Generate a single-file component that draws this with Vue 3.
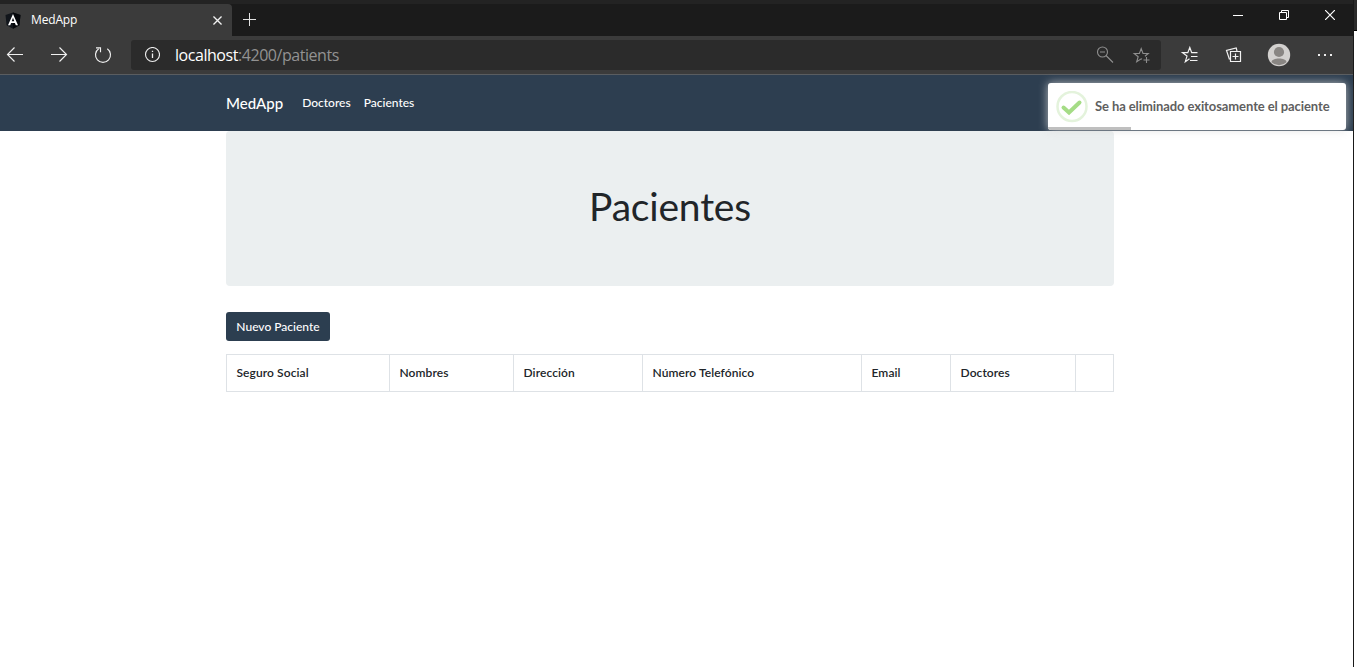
<script setup>
const columns = [
  { label: 'Seguro Social', width: 163 },
  { label: 'Nombres', width: 124 },
  { label: 'Dirección', width: 129 },
  { label: 'Número Telefónico', width: 219 },
  { label: 'Email', width: 89 },
  { label: 'Doctores', width: 125 },
  { label: '', width: 38 },
]
</script>

<template>
  <div class="screen">
    <div class="window">
      <div class="tabstrip">
        <div class="tab">
          <svg class="favicon" width="16" height="17" viewBox="0 0 16 17">
            <path d="M8 .5 15.500 3l-1.100 10.200L8 16.700 1.600 13.200.5 3Z" fill="#11151b" />
            <path d="M8 .5 15.500 3l-1.100 10.200L8 16.700Z" fill="#05070b" />
            <path d="M8 2 3 13.200h2.200l.9-2.300h3.800l.9 2.300H13ZM8 5.800l1.300 3.400H6.700Z" fill="#fff" />
          </svg>
          <span class="tab-title">MedApp</span>
          <svg class="tab-close" width="9" height="9" viewBox="0 0 10 10" fill="none" stroke="#f2f2f2" stroke-width="1.500">
            <path d="m.5.5 9 9M9.500.5l-9 9" />
          </svg>
        </div>
        <svg class="new-tab" width="13" height="13" viewBox="0 0 13 13" fill="none" stroke="#e4e4e4">
          <path d="M6.500 0v13M0 6.500h13" />
        </svg>
        <div class="controls">
          <svg width="10" height="10" viewBox="0 0 10 10" fill="none" stroke="#fff"><path d="M0 5.500h10" /></svg>
          <svg width="10" height="10" viewBox="0 0 10 10" fill="none" stroke="#fff"><path d="M.5 2.500h7v7h-7ZM2.500 2.500v-2h7v7h-2" /></svg>
          <svg width="10" height="10" viewBox="0 0 10 10" fill="none" stroke="#fff" stroke-width="1.200"><path d="m0 0 10 10M10 0 0 10" /></svg>
        </div>
      </div>

      <div class="toolbar">
        <svg class="nav-icons" width="131" height="38" viewBox="0 0 131 38" fill="none" stroke="#f0f0f0" stroke-width="1.150">
          <path d="M7.500 18.500H23M14.500 11.500l-7 7 7 7" />
          <path d="M51 18.500h15.500M59.500 11.500l7 7-7 7" />
          <path d="M107.300 12.700a7.500 7.500 0 1 1-8.600 0" />
          <path d="M96 11.800h4.500v4.500" />
        </svg>
        <div class="address">
          <svg width="16" height="16" viewBox="0 0 16 16" fill="none" stroke="#efefef" stroke-width="1.100">
            <circle cx="8.500" cy="7.500" r="7" />
            <path d="M8.500 6.500V11M8.500 3.700V5" stroke-width="1.300" />
          </svg>
          <span class="url"><b>localhost</b>:4200/patients</span>
          <svg class="address-actions" width="54" height="18" viewBox="0 0 54 18" fill="none" stroke="#8e8e8e" stroke-width="1.100">
            <circle cx="5.500" cy="6" r="5" />
            <path d="M3 6h5M9 9.500l7 7" />
            <path d="m45 13.300-.8-.5-4.500 3 1.500-5.100-4-3.200h5.200l1.800-5 1.800 5h5.200l-3.300 2.700M49.500 11v6M46.500 14h6" />
          </svg>
        </div>
        <svg class="tools" width="192" height="38" viewBox="0 0 192 38" fill="none" stroke="#f2f2f2" stroke-width="1.200">
          <path d="M28.500 22.800 24.300 25.700l1.700-5.600-4.500-3.400h5.300l2-5.200 1.900 5.200H36.500M30 20.500h6.500M29 24.500h7.500" />
          <path d="m68.500 23.500-3-9 9.700-2.600.8 3.100M69.500 15.500h10v10h-10ZM74.500 17.500v6M71.500 20.500h6" />
          <g stroke="none">
            <circle cx="118" cy="19" r="11.200" fill="#d3d1cf" />
            <circle cx="118" cy="16" r="5.100" fill="#898683" />
            <path d="M110.500 26.200c0-5 15-5 15 0a11 11 0 0 1-15 0Z" fill="#898683" />
            <path d="M157 18h2v2h-2ZM163 18h2v2h-2ZM169 18h2v2h-2Z" fill="#eee" />
          </g>
        </svg>
      </div>

      <nav class="navbar">
        <a class="brand">MedApp</a>
        <a class="link doctors">Doctores</a>
        <a class="link">Pacientes</a>
        <div class="toast">
          <svg width="32" height="32" viewBox="0 0 32 32" fill="none">
            <circle cx="16" cy="15.500" r="14.500" stroke="#e4f3dc" stroke-width="2.500" />
            <path d="m7.500 16.500 5.500 5 10.500-10" stroke="#a5dc86" stroke-width="4" stroke-linecap="round" />
          </svg>
          <span class="toast-text">Se ha eliminado exitosamente el paciente</span>
          <div class="progress"></div>
        </div>
      </nav>

      <main class="container">
        <header class="jumbotron"><h1>Pacientes</h1></header>
        <button class="new-patient">Nuevo Paciente</button>
        <table>
          <colgroup>
            <col v-for="(c, i) in columns" :key="i" :style="{ width: c.width + 'px' }" />
          </colgroup>
          <thead>
            <tr><th v-for="(c, i) in columns" :key="i">{{ c.label }}</th></tr>
          </thead>
        </table>
      </main>
    </div>
    <div class="edge"></div>
  </div>
</template>

<style>
body { overflow: hidden; background: #fff; }
</style>

<style scoped>
* { box-sizing: border-box; }
svg { display: block; flex: none; }
.screen { display: flex; width: 1357px; height: 667px; font-family: Lato, sans-serif; }
.window { width: 1353px; flex: none; background: #fff; }
.edge { width: 4px; border-left: 1px solid #191919; background: linear-gradient(#2b2b2b 0 30px, #050505 30px 31px, #fff 31px); }
.tabstrip { display: flex; height: 36px; border-top: 4px solid #232323; background: #1b1b1b; }
.tab { display: flex; align-items: center; width: 232px; background: #3b3b3b; border-radius: 0 4px 0 0; padding: 0 10px 0 5px; }
.tab-title { margin-left: 10px; padding-bottom: 1px; font: 12px "Open Sans", sans-serif; color: #fff; letter-spacing: -.15px; }
.tab-close { margin-left: auto; }
.new-tab { margin: 9px 0 0 11px; }
.controls { display: flex; gap: 36px; margin: 6px 18px 0 auto; }
.toolbar { display: flex; height: 39px; background: #3b3b3b; border-bottom: 1px solid #5a5d60; }
.address { display: flex; align-items: center; width: 1030px; height: 30px; margin-top: 4px; padding: 0 10px 0 13px; border-radius: 3px; background: #2b2b2b; }
.url { margin-left: 15px; font: 16px/22px "Open Sans", sans-serif; letter-spacing: -.45px; color: #929292; }
.url b { font-weight: 400; color: #fff; }
.address-actions { margin-left: auto; }
.navbar { display: flex; align-items: center; height: 56px; padding: 0 0 2px 226px; background: #2d3e50; color: #fff; position: relative; }
.brand { padding-top: 2px; font-size: 15px; font-weight: 500; }
.link { font-size: 12px; font-weight: 500; margin-left: 13px; }
.doctors { margin-left: 19px; }
.toast { position: absolute; left: 1048px; top: 8px; width: 298px; height: 47px; display: flex; align-items: center; padding-left: 8px; border-radius: 3px; background: #fff; overflow: hidden; box-shadow: 0 0 10px rgba(217, 217, 217, .8); }
.toast-text { margin-left: 7px; padding-bottom: 2px; font-size: 13px; font-weight: 700; letter-spacing: -.09px; color: #5f5f5f; white-space: nowrap; }
.progress { position: absolute; left: 0; bottom: 0; width: 83px; height: 3px; background: #bfbfbf; }
.container { width: 888px; margin-left: 226px; }
.jumbotron { display: flex; align-items: center; justify-content: center; height: 155px; padding-bottom: 4px; border-radius: 4px; background: #ebeff0; }
h1 { margin: 0; font-size: 39px; line-height: 47px; font-weight: 400; letter-spacing: -.2px; color: #212529; }
.new-patient { display: block; width: 104px; height: 29px; margin: 26px 0 13px; padding: 0; border: 0; border-radius: 3px; background: #2c3e50; color: #fff; font: 500 12px Lato, sans-serif; }
table { width: 888px; table-layout: fixed; border-collapse: collapse; }
th { height: 37px; padding: 0 9px 2px 9.500px; border: 1px solid #dee2e6; text-align: left; font-size: 12px; font-weight: 600; letter-spacing: .09px; color: #212529; white-space: nowrap; }
</style>
